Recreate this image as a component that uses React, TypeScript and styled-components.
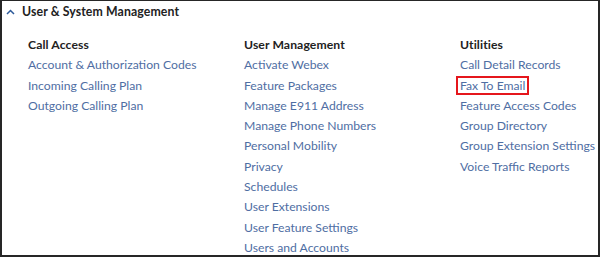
import React from "react";
import styled, { createGlobalStyle } from "styled-components";

const Global = createGlobalStyle`
  html, body { margin: 0; padding: 0; background: #fff; }
  body { font-family: "Lato", "Open Sans", sans-serif; }
`;

const Frame = styled.div`
  box-sizing: border-box;
  width: 600px;
  height: 257px;
  border-style: solid;
  border-color: #262626;
  border-width: 1px 2px 2px 2px;
  overflow: hidden;
  background: #fff;
`;

const Header = styled.div`
  display: flex;
  align-items: center;
  height: 21px;
  padding-left: 4px;
  gap: 7px;
  font-size: 12.3px;
  font-weight: 700;
  color: #222;
  letter-spacing: 0.1px;
`;

const Columns = styled.div`
  display: grid;
  grid-template-columns: 216px 216px 1fr;
  padding: 13px 0 0 26px;
`;

const Column = styled.div`
  display: flex;
  flex-direction: column;
`;

const Heading = styled.div`
  font-size: 12.2px;
  font-weight: 700;
  color: #222;
  line-height: 20.3px;
  letter-spacing: 0.1px;
`;

const Item = styled.div`
  font-size: 12.2px;
  color: #4f6ea3;
  line-height: 20.3px;
  white-space: nowrap;
`;

const Highlight = styled.span`
  display: inline-block;
  box-sizing: border-box;
  line-height: 15px;
  padding: 0 2px 0 2px;
  margin-left: -4px;
  border: 2px solid #e5161c;
`;

const Chevron = () => (
  <svg width="9" height="6" viewBox="0 0 9 6">
    <path d="M1 5 L4.5 1.5 L8 5" fill="none" stroke="#2d5a9a" strokeWidth="1.5" />
  </svg>
);

const cols: { title: string; items: string[] }[] = [
  { title: "Call Access", items: ["Account & Authorization Codes", "Incoming Calling Plan", "Outgoing Calling Plan"] },
  {
    title: "User Management",
    items: [
      "Activate Webex",
      "Feature Packages",
      "Manage E911 Address",
      "Manage Phone Numbers",
      "Personal Mobility",
      "Privacy",
      "Schedules",
      "User Extensions",
      "User Feature Settings",
      "Users and Accounts",
    ],
  },
  {
    title: "Utilities",
    items: [
      "Call Detail Records",
      "Fax To Email",
      "Feature Access Codes",
      "Group Directory",
      "Group Extension Settings",
      "Voice Traffic Reports",
    ],
  },
];

export default function App() {
  return (
    <>
      <Global />
      <Frame>
        <Header>
          <Chevron />
          <span>User &amp; System Management</span>
        </Header>
        <Columns>
          {cols.map((c) => (
            <Column key={c.title}>
              <Heading>{c.title}</Heading>
              {c.items.map((i) => (
                <Item key={i}>
                  {i === "Fax To Email" ? <Highlight>{i}</Highlight> : i}
                </Item>
              ))}
            </Column>
          ))}
        </Columns>
      </Frame>
    </>
  );
}
